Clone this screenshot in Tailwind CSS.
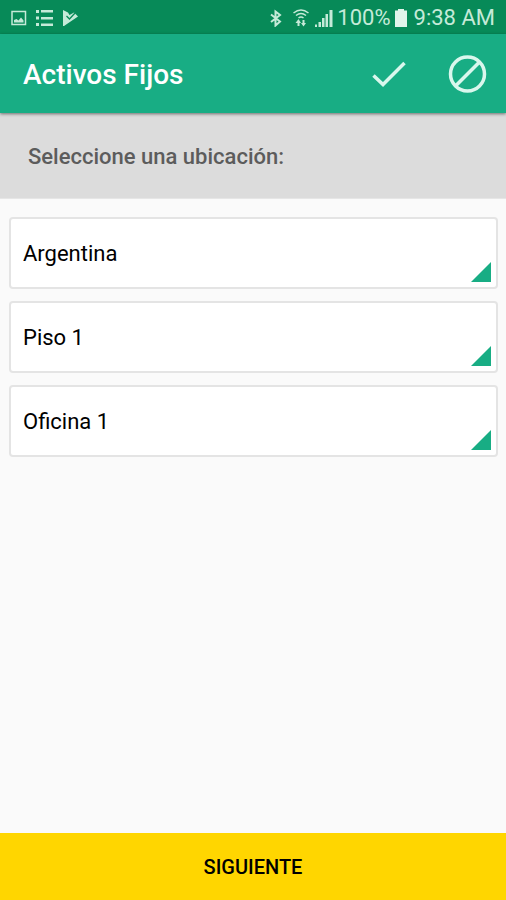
<!DOCTYPE html>
<html lang="es">
<head>
    <meta charset="UTF-8">
    <meta name="viewport" content="width=device-width, initial-scale=1.0">
    <title>Activos Fijos</title>
    <script src="https://cdn.jsdelivr.net/npm/@tailwindcss/browser@4"></script>
</head>
<body class="flex flex-col min-h-screen bg-[#fafafa] font-['Roboto',sans-serif] text-black">
    <!-- Status bar -->
    <div class="flex items-center justify-between h-[34px] pt-[2px] px-[11px] bg-[#078a58] text-[#c5ead8]">
        <div class="flex items-center gap-[9px]">
            <svg class="w-4 h-4" viewBox="0 0 16 16" fill="none" aria-hidden="true">
                <rect x="1" y="1.5" width="13.5" height="13" stroke="currentColor" stroke-width="1.5"/>
                <path d="M3 12.5V10l2.5-1 2 1.5L10 7.5l2.5 3v2z" fill="currentColor"/>
            </svg>
            <svg class="w-[18px] h-4" viewBox="0 0 18 16" fill="currentColor" aria-hidden="true">
                <path d="M0 0h3v3H0zM5 0h12v2.5H5zM0 6.5h3v3H0zM5 7h12v2.5H5zM0 13h3v3H0zM5 13.5h12V16H5z"/>
            </svg>
            <svg class="w-4 h-4" viewBox="0 0 16 16" aria-hidden="true">
                <path d="M0 0l5 2.5 1.5 2.5L11 2.5l4 4L1 16H0z" fill="currentColor"/>
                <path d="M3.5 6l3 3L12 3" fill="none" stroke="#078a58" stroke-width="1.3"/>
            </svg>
        </div>
        <div class="flex items-center">
            <svg class="w-3 h-[18px] mr-[11px]" viewBox="0 0 12 18" fill="none" stroke="currentColor" stroke-width="2" aria-hidden="true">
                <path d="M1 5.5l9 7-4.500 4V2.500L10 6l-9 7"/>
            </svg>
            <svg class="w-4 h-[18px] mr-[6px]" viewBox="0 0 16 18" fill="none" stroke="currentColor" stroke-width="1.5" aria-hidden="true">
                <path d="M0.5 4q7.500-6 15 0M3 6.500q5-4 10 0M5.500 9q2.500-2 5 0"/>
                <path d="M5.500 17v-4M10.500 11v4" stroke-width="2"/>
                <path d="M2.500 14l3-4 2.500 4zM8 14h5l-2.500 3.500z" fill="currentColor" stroke="none"/>
            </svg>
            <svg class="w-[18px] h-[18px] mr-1" viewBox="0 0 18 18" fill="currentColor" aria-hidden="true">
                <path d="M0 15.5h2V18H0zM3.500 13H6v5H3.500zM7 9h2.500v9H7zM10.500 5H13v13h-2.500zM14.500 1H17.500v17h-3z"/>
            </svg>
            <span class="text-[22px] leading-6">100%</span>
            <svg class="w-3 h-[18px] ml-1 mr-[7px]" viewBox="0 0 12 18" fill="#e1f5eb" aria-hidden="true">
                <path d="M3 0h6v1.500h3V18H0V1.500h3z"/>
            </svg>
            <span class="text-[22px] leading-6">9:38 AM</span>
        </div>
    </div>

    <!-- App bar -->
    <header class="relative flex items-center h-[79px] pl-[23px] pr-[18px] bg-[#18ad84] shadow-[0_1px_3px_rgba(0,0,0,0.5)]">
        <h1 class="grow pt-[2px] text-[28px] leading-8 font-medium text-white">Activos Fijos</h1>
        <button type="button" aria-label="Aceptar" class="mr-[41px] text-[#d9f7ed]">
            <svg class="w-9 h-10" viewBox="0 0 36 40" fill="none" stroke="currentColor" stroke-width="3.5">
                <path d="M2.5 21.5l9.500 9L33.500 9"/>
            </svg>
        </button>
        <button type="button" aria-label="Cancelar" class="text-[#d9f7ed]">
            <svg class="w-10 h-10" viewBox="0 0 40 40" fill="none" stroke="currentColor" stroke-width="3.5">
                <circle cx="19.5" cy="20" r="17"/>
                <path d="M7.5 32L31.5 8"/>
            </svg>
        </button>
    </header>

    <main class="grow">
        <h2 class="flex items-center h-[86px] px-7 pt-[2px] bg-[#dcdcdc] border-b border-[#e6e6e6] text-[22px] leading-6 font-medium text-[#5c5c5c]">Seleccione una ubicación:</h2>

        <form id="ubicacion" class="flex flex-col gap-3 pl-[9px] pr-2 pt-[18px]">
            <div class="relative">
                <select aria-label="País" class="block w-full h-[72px] px-3 appearance-none bg-white border-2 border-[#e4e4e4] rounded-sm text-[22px]">
                    <option>Argentina</option>
                </select>
                <svg class="absolute right-[7px] bottom-[7px] w-5 h-5 pointer-events-none" viewBox="0 0 20 20" fill="#18ad84" aria-hidden="true"><path d="M20 0v20H0z"/></svg>
            </div>
            <div class="relative">
                <select aria-label="Piso" class="block w-full h-[72px] px-3 appearance-none bg-white border-2 border-[#e4e4e4] rounded-sm text-[22px]">
                    <option>Piso 1</option>
                </select>
                <svg class="absolute right-[7px] bottom-[7px] w-5 h-5 pointer-events-none" viewBox="0 0 20 20" fill="#18ad84" aria-hidden="true"><path d="M20 0v20H0z"/></svg>
            </div>
            <div class="relative">
                <select aria-label="Oficina" class="block w-full h-[72px] px-3 appearance-none bg-white border-2 border-[#e4e4e4] rounded-sm text-[22px]">
                    <option>Oficina 1</option>
                </select>
                <svg class="absolute right-[7px] bottom-[7px] w-5 h-5 pointer-events-none" viewBox="0 0 20 20" fill="#18ad84" aria-hidden="true"><path d="M20 0v20H0z"/></svg>
            </div>
        </form>
    </main>

    <button type="submit" form="ubicacion" class="w-full h-[67px] bg-[#ffd600] text-[20px] leading-6 font-medium">SIGUIENTE</button>
</body>
</html>
